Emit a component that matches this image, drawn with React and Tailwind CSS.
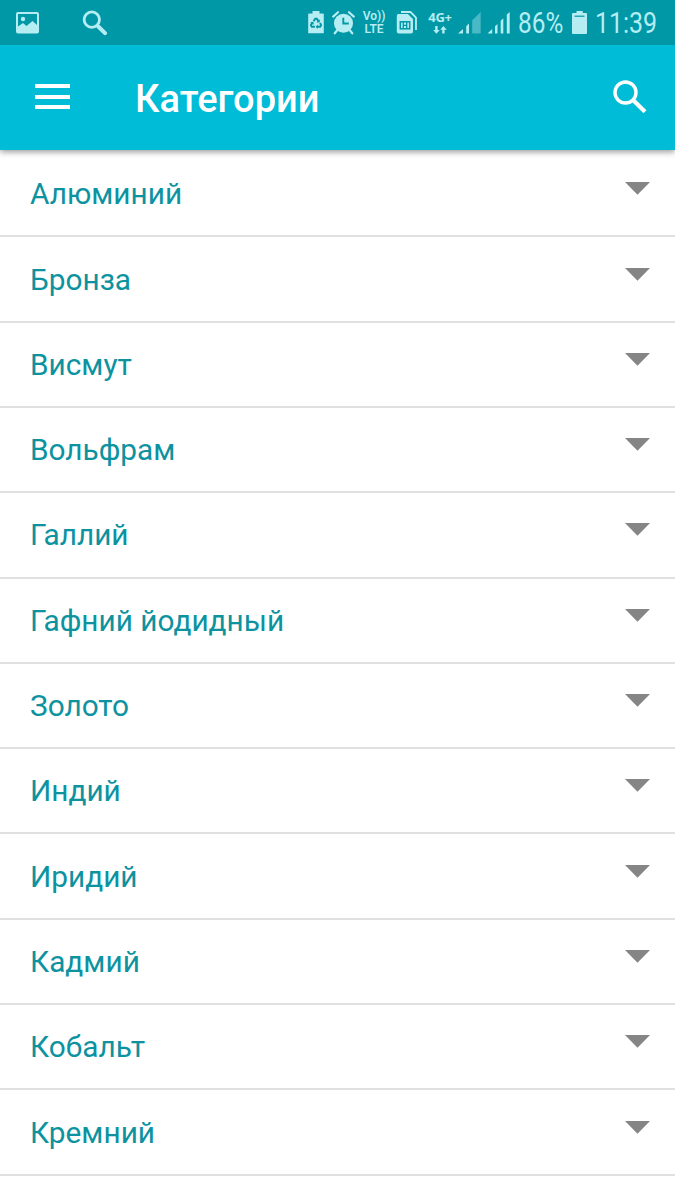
const categories = [
  'Алюминий',
  'Бронза',
  'Висмут',
  'Вольфрам',
  'Галлий',
  'Гафний йодидный',
  'Золото',
  'Индий',
  'Иридий',
  'Кадмий',
  'Кобальт',
  'Кремний',
]

function PictureIcon() {
  return (
    <svg className="ml-4 h-[22px] w-[23px]" viewBox="0 0 23 22" fill="none">
      <rect x="1" y="1" width="21" height="19.5" rx="1" stroke="currentColor" strokeWidth="2" />
      <circle cx="7" cy="7" r="2.2" fill="currentColor" />
      <path d="M2 14.500l5-3.500 3.500 3 6-5L21 13v7H2z" fill="currentColor" />
    </svg>
  )
}

function StatusSearchIcon() {
  return (
    <svg className="ml-[43px] h-[26px] w-[26px]" viewBox="0 0 26 26" fill="none" stroke="currentColor">
      <circle cx="9.8" cy="9.6" r="7.7" strokeWidth="2.8" />
      <path d="M16.3 16.5l6.7 6.7" strokeWidth="4" strokeLinecap="round" />
    </svg>
  )
}

function RecycleBatteryIcon() {
  return (
    <svg className="h-[23px] w-4" viewBox="0 0 16 23">
      <path d="M4.500 0h7v2.500H15a.8.8 0 01.8.8v19H.2v-19a.8.8 0 01.8-.8h3.500z" fill="currentColor" />
      <g fill="none" stroke="#0097a7" strokeWidth="1.9">
        <path d="M5.6 10.300L7.200 7.700h1.600l1.800 2.700" />
        <path d="M12.100 12l1 2.300-.9 1.500H9" />
        <path d="M6.900 15.800H3.800l-.9-1.500 1.300-2.500" />
      </g>
      <path d="M11.700 8.300v3.300H8.500zM9.700 13.400v4.500l-2-2.200zM2.300 11.200l3.100-.5.500 3.100z" fill="#0097a7" />
    </svg>
  )
}

function AlarmIcon() {
  return (
    <svg className="ml-2 h-6 w-[23px]" viewBox="0 0 23 24" fill="none">
      <path d="M5 19.500l-2.300 2.800M18 19.500l2.300 2.800" stroke="currentColor" strokeWidth="2.200" strokeLinecap="round" />
      <path d="M1.200 5.600L6 1.200M21.800 5.600L17 1.200" stroke="currentColor" strokeWidth="2.200" strokeLinecap="round" />
      <circle cx="11.500" cy="12.300" r="9.500" fill="currentColor" />
      <path d="M11.300 6.800v5.700h5.500" stroke="#0097a7" strokeWidth="1.900" />
    </svg>
  )
}

function SimIcon() {
  return (
    <svg className="ml-[11px] h-[23px] w-[22px]" viewBox="0 0 22 23" fill="none">
      <path d="M5 1h9.500l5.500 5.500V19" stroke="currentColor" strokeWidth="1.800" />
      <path d="M2.500 3h9.300l5.200 5v12.500a2 2 0 01-2 2H2.800a2 2 0 01-2-2V4.700A1.700 1.700 0 012.500 3z" fill="currentColor" />
      <rect x="4.300" y="10.800" width="9.400" height="7" stroke="#0097a7" strokeWidth="1.500" />
      <path d="M7.300 10.500V18M10.700 10.500V18M7.300 14.300h3.400" stroke="#0097a7" strokeWidth="1.300" />
    </svg>
  )
}

function DataIcon() {
  return (
    <div className="ml-[10px] flex w-6 flex-col items-center">
      <span className="font-['Open_Sans',sans-serif] text-[13px] leading-[13px] font-bold tracking-[-0.2px]">4G+</span>
      <svg className="mt-0.5 h-2 w-3.5" viewBox="0 0 14 8" fill="currentColor">
        <path d="M2.200 0h2.400v4h2.200L3.400 7.800.2 4h2zM9.200 7.500h2.400V3.800h2.200L10.400 0 7.200 3.800h2z" />
      </svg>
    </div>
  )
}

function WeakSignalIcon() {
  return (
    <svg className="ml-1.5 h-[23px] w-[23px]" viewBox="0 0 23 23" fill="currentColor">
      <path d="M0 22.500L5 18v4.500zM8.200 15.300l2.800-2.700v9.900H8.200z" />
      <path d="M14.200 9.300L22.700 1v21.500h-8.500z" opacity="0.400" />
    </svg>
  )
}

function SignalIcon() {
  return (
    <svg className="ml-1.5 h-[23px] w-6" viewBox="0 0 24 23" fill="currentColor">
      <path d="M.5 22.500l4.700-4.500v4.500zM8 15.300l2.500-2.300v9.500H8zM13.700 9.800l2.600-2.500v15.200h-2.600zM19.800 3.600L22.700 1v21.500h-2.900z" />
    </svg>
  )
}

function BatteryIcon() {
  return (
    <svg className="ml-2 h-[23px] w-[15px]" viewBox="0 0 15 23" fill="none">
      <path d="M4.500 0h6.300v2H14a1 1 0 011 1v19a1 1 0 01-1 1H1a1 1 0 01-1-1V3a1 1 0 011-1h3.500z" fill="currentColor" />
      <path d="M2.500 5.200h10" stroke="#0097a7" strokeWidth="1.200" />
    </svg>
  )
}

function StatusBar() {
  return (
    <div className="relative z-10 flex h-[45px] items-center bg-[#0097a7] text-[#b5edf2]">
      <PictureIcon />
      <StatusSearchIcon />
      <div className="ml-auto flex items-center pr-[18px]">
        <RecycleBatteryIcon />
        <AlarmIcon />
        <div className="ml-2 flex w-[22px] flex-col items-center text-[12px] leading-[13px] font-semibold">
          <span>Vo))</span>
          <span>LTE</span>
        </div>
        <SimIcon />
        <DataIcon />
        <WeakSignalIcon />
        <SignalIcon />
        <div className="ml-[7px] w-[46px] pt-[2px] text-[29px] leading-none">
          <span className="inline-block origin-left scale-x-[0.84]">86%</span>
        </div>
        <BatteryIcon />
        <div className="ml-2 w-[62px] pt-[2px] text-[29px] leading-none">
          <span className="inline-block origin-left scale-x-[0.86]">11:39</span>
        </div>
      </div>
    </div>
  )
}

function AppBar() {
  return (
    <header className="relative flex h-[105px] items-center bg-[#00bcd7] text-white shadow-[0_2px_6px_rgba(0,0,0,0.4)]">
      <button className="mb-[2px] ml-[35px] flex w-[35px] flex-col gap-[6.5px]" aria-label="Меню">
        <span className="h-1 w-full bg-white" />
        <span className="h-1 w-full bg-white" />
        <span className="h-1 w-full bg-white" />
      </button>
      <h1 className="mt-[3px] ml-[65px] text-[38px] leading-[44px] font-medium">Категории</h1>
      <button className="mr-[28px] mb-px ml-auto" aria-label="Поиск">
        <svg className="h-[34px] w-[34px]" viewBox="0 0 34 34" fill="none" stroke="currentColor">
          <circle cx="12.500" cy="12.500" r="10.500" strokeWidth="3.400" />
          <path d="M20.500 20.500l11.500 11.300" strokeWidth="4.200" />
        </svg>
      </button>
    </header>
  )
}

function CategoryRow({ name }) {
  return (
    <li className="flex h-[85.3px] items-center justify-between border-b-2 border-[#e0e0e0] pr-[25px] pl-[30px]">
      <span className="mt-px text-[29.8px] leading-[36px] text-[#0d929f]">{name}</span>
      <svg className="mb-[10px] h-[13px] w-[25px]" viewBox="0 0 25 13">
        <path d="M0 0h25L12.500 12.700z" fill="#858585" />
      </svg>
    </li>
  )
}

export default function App() {
  return (
    <div className="h-[1200px] w-[675px] overflow-hidden bg-white font-[Roboto,sans-serif]">
      <StatusBar />
      <AppBar />
      <ul className="pt-[2.1px]">
        {categories.map((name) => (
          <CategoryRow key={name} name={name} />
        ))}
      </ul>
    </div>
  )
}
